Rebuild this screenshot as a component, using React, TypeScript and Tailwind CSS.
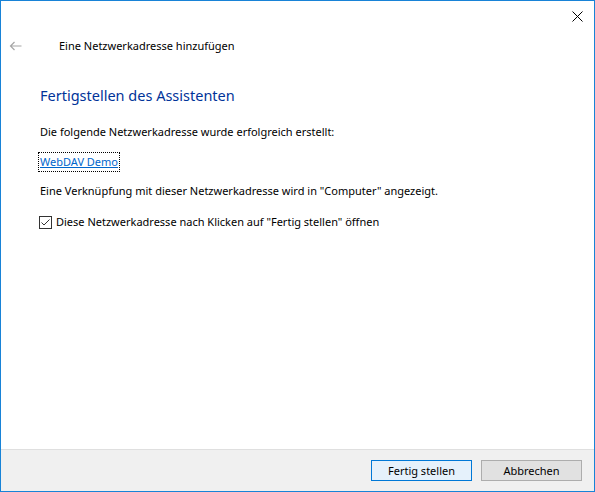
import React from "react";

// Wizard page: "add network location" finish step
export default function App() {
  return (
    <div className="w-[595px] h-[492px] border border-[#1883d7] bg-white flex flex-col font-['Noto_Sans',sans-serif] text-[11px] text-black">
      {/* caption bar with close */}
      <div className="h-[30px] flex justify-end items-center pr-[11px]">
        <svg width="11" height="11" viewBox="0 0 11 11" className="block">
          <path d="M0.5 0.5 L10.5 10.5 M10.5 0.5 L0.5 10.5" stroke="#000" strokeWidth="1" fill="none" />
        </svg>
      </div>

      {/* back arrow + wizard title */}
      <div className="h-[29px] flex items-center">
        <svg width="13" height="10" viewBox="0 0 13 10" className="ml-[8px] block">
          <path d="M12.5 5 H1.5 M5.5 1 L1.5 5 L5.5 9" stroke="#a6a6a6" strokeWidth="1.2" fill="none" />
        </svg>
        <span className="ml-[37px] leading-[16px]">Eine Netzwerkadresse hinzufügen</span>
      </div>

      {/* page body */}
      <div className="flex-1 pl-[39px] flex flex-col items-start">
        <h1 className="mt-[24px] text-[14.5px] leading-[22px] text-[#003399] font-normal">
          Fertigstellen des Assistenten
        </h1>
        <p className="mt-[18px] leading-[16px]">Die folgende Netzwerkadresse wurde erfolgreich erstellt:</p>
        <a
          href="#"
          className="mt-[14px] leading-[16px] text-[#0066cc] underline outline-1 outline-dotted outline-black outline-offset-[1px]"
        >
          WebDAV Demo
        </a>
        <p className="mt-[13px] leading-[16px]">
          Eine Verknüpfung mit dieser Netzwerkadresse wird in "Computer" angezeigt.
        </p>
        <label className="mt-[15px] -ml-[1px] flex items-center leading-[16px]">
          <span className="w-[13px] h-[13px] border border-[#333] bg-white flex items-center justify-center">
            <svg width="11" height="11" viewBox="0 0 11 11" className="block">
              <path d="M1.5 5.5 L4 8 L9.5 2.5" stroke="#333" strokeWidth="1" fill="none" />
            </svg>
          </span>
          <span className="ml-[4px]">Diese Netzwerkadresse nach Klicken auf "Fertig stellen" öffnen</span>
        </label>
      </div>

      {/* command area */}
      <div className="h-[42px] border-t border-[#dfdfdf] bg-[#f0f0f0] flex justify-end items-center gap-[9px] pr-[12px]">
        <button className="w-[101px] h-[21px] border border-[#0078d7] bg-[#e5f1fb] leading-[16px]">
          Fertig stellen
        </button>
        <button className="w-[101px] h-[21px] border border-[#adadad] bg-[#e1e1e1] leading-[16px]">
          Abbrechen
        </button>
      </div>
    </div>
  );
}
